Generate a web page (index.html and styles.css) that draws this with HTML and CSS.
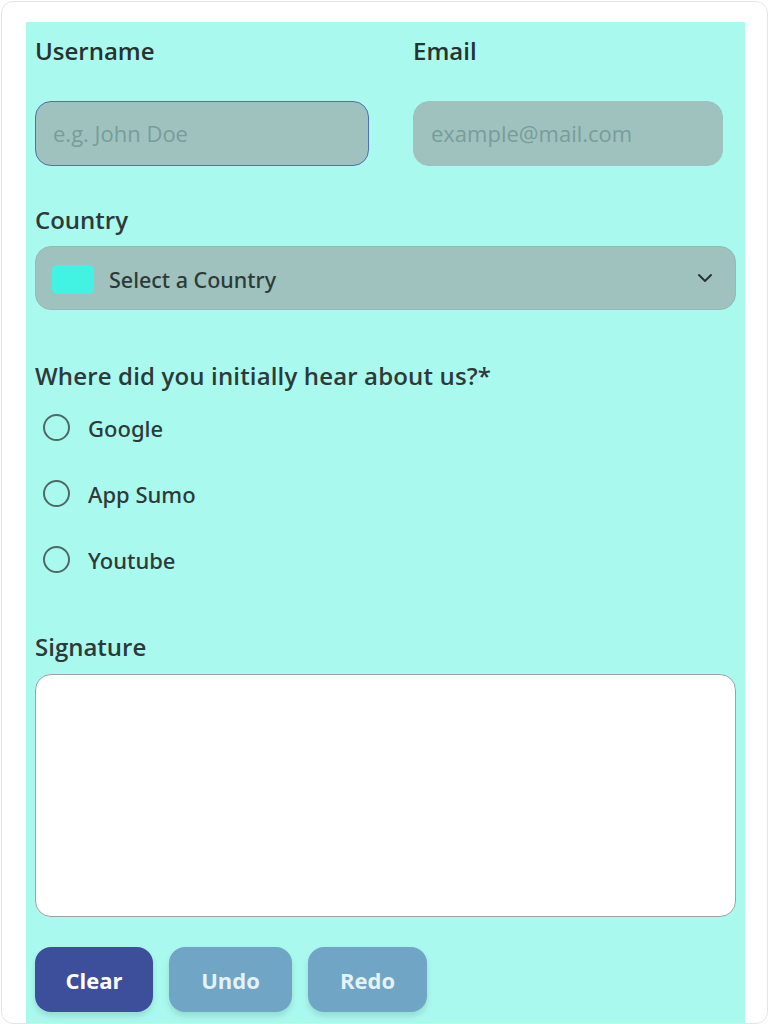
FILE: index.html
```html
<!DOCTYPE html>
<html lang="en">
<head>
<meta charset="utf-8">
<title>Form</title>
<link rel="stylesheet" href="styles.css">
</head>
<body>
<div class="card">
  <form class="panel">
    <div class="row">
      <div class="field">
        <label class="label label-top">Username</label>
        <input class="input input-user" type="text" placeholder="e.g. John Doe">
      </div>
      <div class="field">
        <label class="label label-top">Email</label>
        <input class="input input-email" type="text" placeholder="example@mail.com">
      </div>
    </div>

    <label class="label label-country">Country</label>
    <div class="select">
      <span class="swatch"></span>
      <span class="select-text">Select a Country</span>
      <svg class="chevron" width="16" height="10" viewBox="0 0 16 10"><path d="M2 2 L8 8 L14 2" fill="none" stroke="#2a3533" stroke-width="2" stroke-linecap="round" stroke-linejoin="round"/></svg>
    </div>

    <div class="label label-question">Where did you initially hear about us?*</div>
    <div class="radios">
      <div class="radio-row"><span class="radio"></span><span class="radio-label">Google</span></div>
      <div class="radio-row"><span class="radio"></span><span class="radio-label">App Sumo</span></div>
      <div class="radio-row"><span class="radio"></span><span class="radio-label">Youtube</span></div>
    </div>

    <div class="label label-sig">Signature</div>
    <div class="signature"></div>

    <div class="buttons">
      <button type="button" class="btn btn-clear">Clear</button>
      <button type="button" class="btn btn-muted btn-undo">Undo</button>
      <button type="button" class="btn btn-muted btn-redo">Redo</button>
    </div>
  </form>
</div>
</body>
</html>
```
FILE: styles.css
```css
* { box-sizing: border-box; }
html, body { margin: 0; padding: 0; background: #ffffff; }
body {
  font-family: "Open Sans", "Noto Sans", sans-serif;
  color: #27332f;
}
.card {
  margin: 1px 1px 0 1px;
  width: 767px;
  height: 1023px;
  border: 1px solid #e4e6e6;
  border-radius: 12px;
  padding: 20px 22px 0 24px;
  overflow: hidden;
  background: #fff;
}
.panel {
  background: #aaf9ef;
  height: 100%;
  padding: 13px 9px 0 9px;
  display: flex;
  flex-direction: column;
}
.row {
  display: grid;
  grid-template-columns: 378px 1fr;
}
.field { display: flex; flex-direction: column; }
.label {
  font-size: 24px;
  font-weight: 600;
  line-height: 32px;
  color: #27332f;
  display: block;
}
.label-top { margin-bottom: 34px; }
.input {
  height: 65px;
  border-radius: 16px;
  background: #9fc2bf;
  font-family: inherit;
  font-size: 22px;
  padding: 0 0 2px 17px;
  color: #27332f;
  outline: none;
}
.input::placeholder { color: #789d99; }
.input-user { width: 334px; border: 1px solid #4d6fb3; }
.input-email { width: 310px; border: 1px solid #9fc2bf; }
.label-country { margin-top: 38px; margin-bottom: 10px; color: #2d3a37; }
.select {
  height: 64px;
  border-radius: 16px;
  background: #9fc2bf;
  border: 1px solid #95b9b5;
  display: flex;
  align-items: center;
  padding: 0 22px 0 16px;
}
.swatch {
  width: 42px;
  height: 29px;
  border-radius: 5px;
  background: #42f2e2;
  margin-top: 2px;
}
.select-text {
  margin-left: 15px;
  font-family: "Noto Sans", "Open Sans", sans-serif;
  font-size: 21.5px;
  font-weight: 500;
  color: #2d3a37;
  flex: 1;
  margin-top: 2px;
}
.label-question { margin-top: 50px; letter-spacing: 0.15px; color: #2d3a37; }
.radios { margin-top: 2px; display: flex; flex-direction: column; }
.radio-row {
  height: 66px;
  display: flex;
  align-items: center;
  padding-left: 8px;
}
.radio {
  width: 27px;
  height: 27px;
  border-radius: 50%;
  border: 2px solid #4e6966;
  flex: none;
}
.radio-label {
  margin-left: 18px;
  font-family: "Noto Sans", "Open Sans", sans-serif;
  font-size: 22px;
  font-weight: 500;
  color: #2d3a37;
  margin-top: 1px;
}
.label-sig { margin-top: 39px; margin-bottom: 11px; color: #2d3a37; }
.signature {
  height: 243px;
  background: #ffffff;
  border: 1px solid #9aa5a3;
  border-radius: 16px;
}
.buttons {
  margin-top: 30px;
  display: flex;
  gap: 16px;
}
.btn {
  height: 65px;
  border: none;
  border-radius: 16px;
  font-family: inherit;
  font-size: 22px;
  font-weight: 700;
  box-shadow: 0 4px 6px rgba(0, 0, 0, 0.12);
}
.btn-clear { width: 118px; background: #3d4e9b; color: #ffffff; }
.btn-muted { background: #71a5c6; color: #e3f3f8; }
.btn-undo { width: 123px; }
.btn-redo { width: 119px; }
```
